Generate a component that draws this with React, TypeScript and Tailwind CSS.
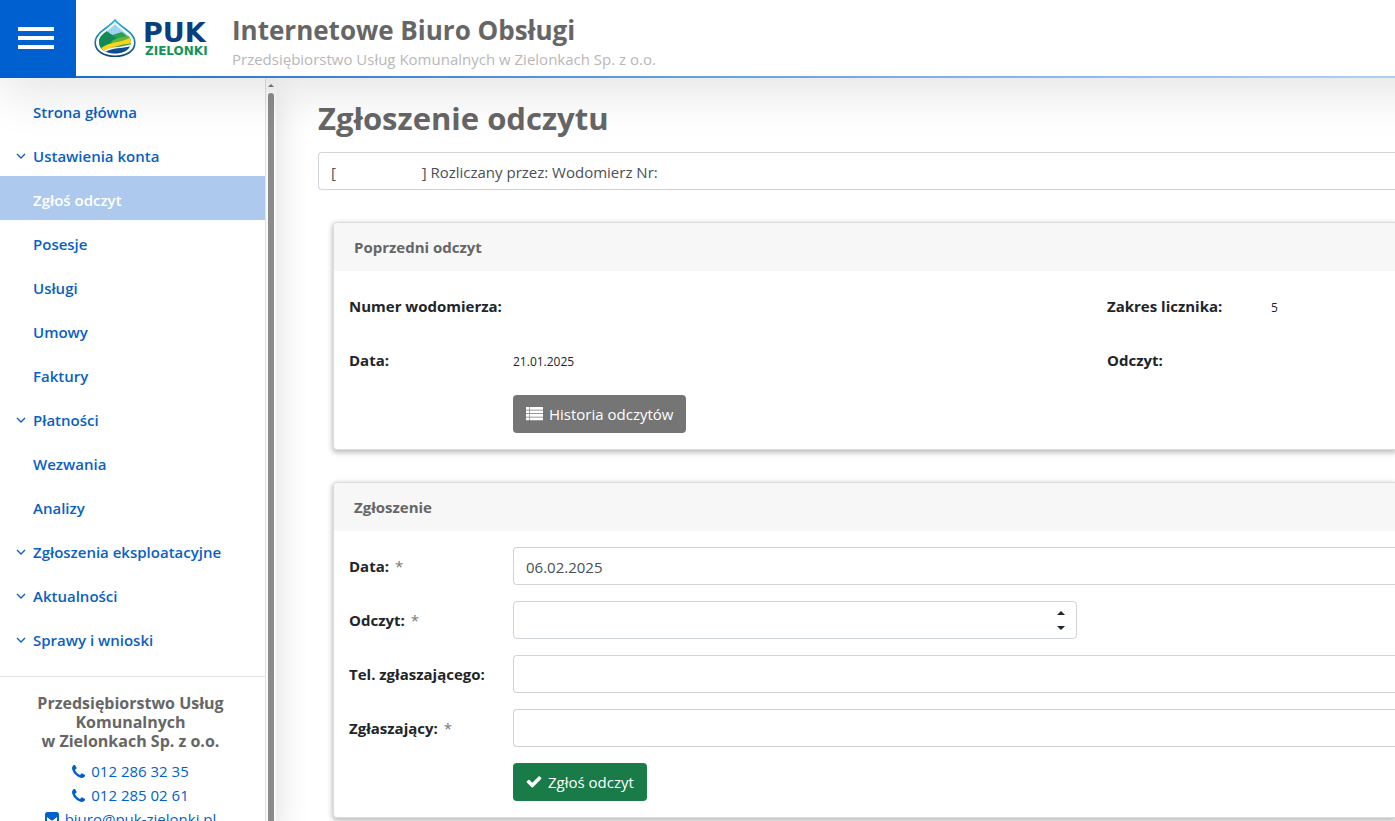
import clsx from "clsx";

interface MenuItem {
   title: string;
   expandable?: boolean;
   active?: boolean;
}

const menuItems: MenuItem[] = [
   { title: "Strona główna" },
   { title: "Ustawienia konta", expandable: true },
   { title: "Zgłoś odczyt", active: true },
   { title: "Posesje" },
   { title: "Usługi" },
   { title: "Umowy" },
   { title: "Faktury" },
   { title: "Płatności", expandable: true },
   { title: "Wezwania" },
   { title: "Analizy" },
   { title: "Zgłoszenia eksploatacyjne", expandable: true },
   { title: "Aktualności", expandable: true },
   { title: "Sprawy i wnioski", expandable: true },
];

const phones: string[] = ["012 286 32 35", "012 285 02 61"];

const reading = `[${"\u00a0".repeat(22)}] Rozliczany przez: Wodomierz Nr:`;

function Logo(): JSX.Element {
   return (
      <svg className="ml-[18px] h-[42px] w-[122px] shrink-0 overflow-visible" viewBox="0 0 122 42" role="img" aria-label="PUK Zielonki">
         <defs>
            <linearGradient id="ring" x1="0" y1="0" x2="0" y2="1">
               <stop offset="0" stopColor="#1fb4d8" />
               <stop offset="0.5" stopColor="#1a7fb4" />
               <stop offset="1" stopColor="#0d4384" />
            </linearGradient>
            <clipPath id="drop">
               <path d="M21 7C15 14 5 17 5 25C5 32 12 36.500 21 36.500C30 36.500 37 32 37 25C37 17 27 14 21 7Z" />
            </clipPath>
         </defs>
         <path d="M21 3C15 11 1.200 15 1.200 25.500C1.200 34.500 10 39.200 21 39.200C32 39.200 40.800 34.500 40.800 25.500C40.800 15 27 11 21 3Z" fill="#fff" stroke="url(#ring)" strokeWidth="1.600" />
         <g clipPath="url(#drop)">
            <path d="M4 4H38V38H4Z" fill="#9fd3f3" />
            <path d="M4 20L12 14L18 18L28 15L38 23V38H4Z" fill="#2ba150" />
            <path d="M4 20L12 14C19 18 23 22 26 25L4 35Z" fill="#118a55" />
            <path d="M17 25C23 20 29 21 38 18V25L20 28Z" fill="#68b437" />
            <path d="M5 33C14 24 25 27 38 20V26C27 28 19 29 8 35Z" fill="#fdd31c" />
            <path d="M10 34C18 29 27 31 38 27V38H10Z" fill="#fff" />
            <path d="M11 35C20 30 27 32 38 29V38H11Z" fill="#0f4b8f" />
         </g>
         <text x="49" y="25" fontSize="27" fontWeight="700" fontFamily="DejaVu Sans, sans-serif" fill="#0a3f7f">PUK</text>
         <text x="51" y="38" fontSize="12" fontWeight="700" fontFamily="DejaVu Sans, sans-serif" fill="#12935a">ZIELONKI</text>
      </svg>
   );
}

function Header(): JSX.Element {
   return (
      // Runs past the right edge so the shadow does not fade out there
      <header className="relative z-10 -mr-16 flex h-[78px] shrink-0 bg-white shadow-[0_16px_48px_rgba(0,0,0,0.1)]">
         <button type="button" aria-label="Menu" className="flex w-[76px] shrink-0 flex-col items-center justify-center gap-[5px] bg-[#0060cf] pr-1 pb-[2px]">
            <span className="h-1 w-9 bg-white" />
            <span className="h-1 w-9 bg-white" />
            <span className="h-1 w-9 bg-white" />
         </button>
         <div className="flex min-w-0 flex-1 flex-col">
            <div className="flex flex-1 items-center">
               <Logo />
               <div className="ml-4 pt-[6px] text-[#666]">
                  <p className="text-[26px] leading-[36px] font-bold whitespace-nowrap">Internetowe Biuro Obsługi</p>
                  <p className="text-[15px] leading-[22px] whitespace-nowrap text-[#b8b8b8]">Przedsiębiorstwo Usług Komunalnych w Zielonkach Sp. z o.o.</p>
               </div>
            </div>
            <div className="h-[2px] bg-linear-to-r from-[#1b6fd1] to-[#b8d4f4]" />
         </div>
      </header>
   );
}

function ChevronIcon(): JSX.Element {
   return (
      <svg className="h-2 w-3" viewBox="0 0 12 8" fill="none" stroke="currentColor" strokeWidth="1.300">
         <path d="M2 2L6 6L10 2" />
      </svg>
   );
}

function PhoneIcon(): JSX.Element {
   return (
      <svg className="size-[13px]" viewBox="0 128 1408 1408" fill="currentColor">
         <path d="M1408 1240q0 27-10 70.500t-21 68.500q-21 50-122 106-94 51-186 51-27 0-52.500-3.500t-57.500-12.500-47.500-14.500-55.500-20.500-49-18q-98-35-175-83-128-79-264.500-215.500t-215.500-264.500q-48-77-83-175-3-9-18-49t-20.500-55.500-14.500-47.500-12.500-57.500-3.500-52.500q0-92 51-186 56-101 106-122 25-11 68.500-21t70.500-10q14 0 21 3 18 6 53 76 11 19 30 54t35 63.500 31 53.500q3 4 17.500 25t21.500 35.500 7 28.500q0 20-28.500 50t-62 55-62 53-28.500 46q0 9 5 22.500t8.500 20.500 14 24 11.500 19q76 137 174 235t235 174q2 1 19 11.500t24 14 20.500 8.500 22.500 5q18 0 46-28.500t53-62 55-62 50-28.500q14 0 28.500 7t35.500 21.500 25 17.500q25 15 53.500 31t63.500 35 54 30q70 35 76 53 3 7 3 21z" />
      </svg>
   );
}

function MailIcon(): JSX.Element {
   return (
      <svg className="size-[14px]" viewBox="0 0 14 14">
         <rect width="14" height="14" rx="2.500" fill="currentColor" />
         <path d="M2 5L6 8.200Q7 9 8 8.200L12 5V12H2Z" fill="#fff" />
      </svg>
   );
}

function ListIcon(): JSX.Element {
   return (
      <svg className="h-[14px] w-[17px]" viewBox="0 0 17 14" fill="currentColor">
         {[0, 3.5, 7, 10.5].map((y: number) => (
            <path d={`M0 ${y}h3v2.7h-3zM3.6 ${y}h13.4v2.7h-13.4z`} key={y} />
         ))}
      </svg>
   );
}

function CheckIcon(): JSX.Element {
   return (
      <svg className="size-4" viewBox="60 100 1672 1672" fill="currentColor">
         <path d="M1671 566q0 40-28 68l-724 724-136 136q-28 28-68 28t-68-28l-136-136-362-362q-28-28-28-68t28-68l136-136q28-28 68-28t68 28l294 295 656-657q28-28 68-28t68 28l136 136q28 28 28 68z" />
      </svg>
   );
}

function Sidebar(): JSX.Element {
   return (
      <aside className="flex w-[276px] shrink-0 bg-white shadow-[0_16px_32px_rgba(0,0,0,0.15)]">
         <div className="min-w-0 flex-1 border-r border-[#dee2e6] pt-[10px]">
            <nav className="pb-4">
               {menuItems.map((item: MenuItem) => (
                  <a
                     href="#"
                     key={item.title}
                     className={clsx(
                        "flex h-11 items-center pt-1 text-[15px] font-semibold whitespace-nowrap",
                        item.active ? "bg-[#adcaee] text-white" : "text-[#0a5fc4]"
                     )}
                  >
                     <span className="flex w-[33px] shrink-0 pl-[15px]">{item.expandable && <ChevronIcon />}</span>
                     {item.title}
                  </a>
               ))}
            </nav>
            <div className="flex flex-col items-center border-t border-[#dee2e6] pt-[17px] pr-1 text-[15px] text-[#0060cf]">
               <p className="mb-2 text-center text-base leading-[19px] font-bold text-[#666]">
                  Przedsiębiorstwo Usług
                  <br />
                  Komunalnych
                  <br />
                  w Zielonkach Sp. z o.o.
               </p>
               {phones.map((phone: string) => (
                  <a href="#" key={phone} className="flex items-center gap-[6px] leading-6">
                     <PhoneIcon />
                     {phone}
                  </a>
               ))}
               <a href="#" className="flex items-center gap-[6px] leading-6">
                  <MailIcon />
                  biuro@puk-zielonki.pl
               </a>
            </div>
         </div>
         <div className="flex w-[10px] shrink-0 flex-col items-center bg-[#fafafa] pt-[6px]">
            <svg className="h-[3px] w-[6px]" viewBox="0 0 6 3">
               <path d="M0 3L3 0L6 3Z" fill="#777" />
            </svg>
            <div className="mt-[6px] w-[6px] flex-1 rounded-t-full bg-[#8b8b8b]" />
         </div>
      </aside>
   );
}

interface CardProps {
   title: string;
   children: React.ReactNode;
}

function Card(props: CardProps): JSX.Element {
   const { title, children } = props;

   return (
      <section className="ml-[15px] rounded-l border border-r-0 border-[#dcdcdc] bg-white shadow-[0_2px_5px_1px_rgba(0,0,0,0.25)]">
         <h2 className="h-12 rounded-tl bg-[#f7f7f7] pl-5 text-[15px] leading-[48px] font-bold text-[#666]">{title}</h2>
         {children}
      </section>
   );
}

const inputClass = "h-[38px] w-full border border-[#ced4da] bg-white px-3 pt-[2px] text-[15px] text-[#495057]";
const buttonClass = "flex h-[38px] items-center gap-[6px] rounded px-[13px] text-[15px] text-white";

interface FieldProps {
   id: string;
   label: string;
   required?: boolean;
   children: React.ReactNode;
}

function Field(props: FieldProps): JSX.Element {
   const { id, label, required, children } = props;

   return (
      <div className="flex items-center">
         <label htmlFor={id} className="w-[164px] shrink-0 text-[15px] font-bold">
            {label}
            {required && <span className="ml-[6px] font-normal text-[#777]">*</span>}
         </label>
         {children}
      </div>
   );
}

function PreviousReading(): JSX.Element {
   return (
      <Card title="Poprzedni odczyt">
         <dl className="grid auto-rows-[38px] grid-cols-[164px_1fr_164px_124px] items-center gap-y-4 pt-4 pb-4 pl-[15px] text-[15px]">
            <dt className="font-bold">Numer wodomierza:</dt>
            <dd />
            <dt className="font-bold">Zakres licznika:</dt>
            <dd className="pt-[3px] text-xs">5</dd>
            <dt className="font-bold">Data:</dt>
            <dd className="pt-[3px] text-xs">21.01.2025</dd>
            <dt className="font-bold">Odczyt:</dt>
            <dd />
            <dd className="col-start-2">
               <button type="button" className={clsx(buttonClass, "bg-[#757575]")}>
                  <ListIcon />
                  Historia odczytów
               </button>
            </dd>
         </dl>
      </Card>
   );
}

function ReadingForm(): JSX.Element {
   return (
      <Card title="Zgłoszenie">
         <form className="flex flex-col gap-4 pt-4 pb-4 pl-[15px]">
            <Field id="date" label="Data:" required>
               <input id="date" defaultValue="06.02.2025" className={clsx(inputClass, "rounded-l border-r-0")} />
            </Field>
            <Field id="value" label="Odczyt:" required>
               <div className="relative w-full max-w-[564px]">
                  <input id="value" className={clsx(inputClass, "rounded")} />
                  <div className="absolute top-0 right-3 flex h-full flex-col justify-center gap-[11px]">
                     <button type="button" aria-label="Zwiększ">
                        <svg className="h-1 w-2" viewBox="0 0 8 4">
                           <path d="M0 4L4 0L8 4Z" fill="#212529" />
                        </svg>
                     </button>
                     <button type="button" aria-label="Zmniejsz">
                        <svg className="h-1 w-2" viewBox="0 0 8 4">
                           <path d="M0 0L4 4L8 0Z" fill="#212529" />
                        </svg>
                     </button>
                  </div>
               </div>
            </Field>
            <Field id="phone" label="Tel. zgłaszającego:">
               <input id="phone" className={clsx(inputClass, "rounded-l border-r-0")} />
            </Field>
            <Field id="person" label="Zgłaszający:" required>
               <input id="person" className={clsx(inputClass, "rounded-l border-r-0")} />
            </Field>
            <button type="submit" className={clsx(buttonClass, "ml-[164px] self-start bg-[#197b48]")}>
               <CheckIcon />
               Zgłoś odczyt
            </button>
         </form>
      </Card>
   );
}

export default function App(): JSX.Element {
   return (
      <div className="flex h-screen flex-col overflow-hidden bg-white font-['Open_Sans',sans-serif] text-[#212529]">
         <Header />
         <div className="flex min-h-0 flex-1">
            <Sidebar />
            <main className="min-w-0 flex-1 pt-5 pl-[42px]">
               <h1 className="text-[31px] leading-[40px] font-bold text-[#666]">Zgłoszenie odczytu</h1>
               <select aria-label="Wodomierz" className={clsx(inputClass, "mt-[14px] appearance-none rounded-l border-r-0")}>
                  <option>{reading}</option>
               </select>
               <div className="mt-8 flex flex-col gap-8">
                  <PreviousReading />
                  <ReadingForm />
               </div>
            </main>
         </div>
      </div>
   );
}
